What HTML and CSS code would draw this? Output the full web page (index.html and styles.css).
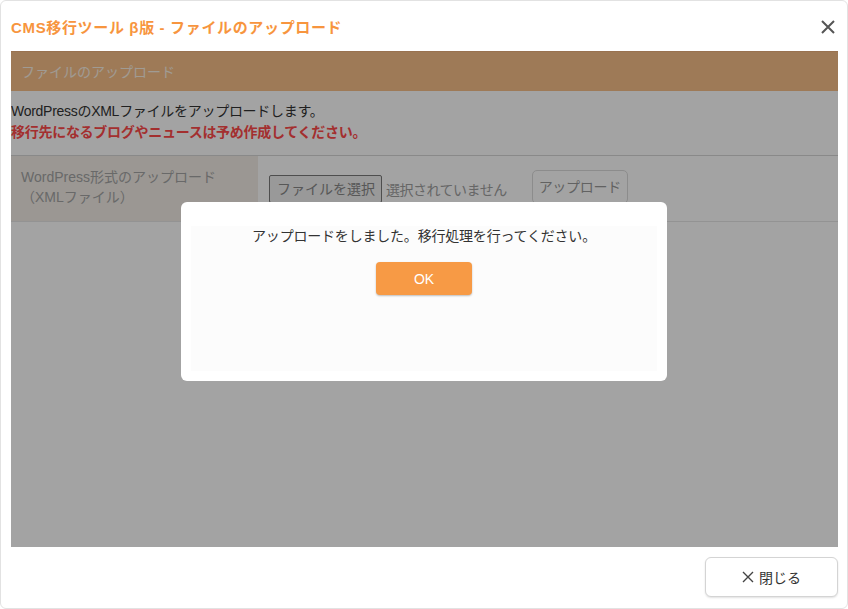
FILE: index.html
```html
<!DOCTYPE html>
<html lang="ja">
<head>
    <meta charset="UTF-8">
    <meta name="viewport" content="width=device-width, initial-scale=1.0">
    <title>CMS移行ツール β版 - ファイルのアップロード</title>
    <link rel="stylesheet" href="styles.css">
</head>
<body>
    <div class="window">
        <div class="window-head">
            <h1 class="window-title">CMS移行ツール β版 - ファイルのアップロード</h1>
            <button class="close-x" title="閉じる">
                <svg width="16" height="16" viewBox="0 0 16 16">
                    <path d="M2 2 L14 14 M14 2 L2 14" stroke="#555" stroke-width="2" fill="none"></path>
                </svg>
            </button>
        </div>

        <div class="frame">
            <div class="panel-head">ファイルのアップロード</div>
            <div class="intro">
                <p>WordPressのXMLファイルをアップロードします。</p>
                <p class="warn">移行先になるブログやニュースは予め作成してください。</p>
            </div>
            <div class="form-row">
                <div class="form-label">WordPress形式のアップロード<br>（XMLファイル）</div>
                <div class="form-field">
                    <span class="file-btn">ファイルを選択</span>
                    <span class="file-name">選択されていません</span>
                    <span class="upload-btn">アップロード</span>
                </div>
            </div>

            <!-- モーダル背景 -->
            <div class="backdrop"></div>
            <div class="dialog">
                <div class="dialog-body">
                    <p class="dialog-msg">アップロードをしました。移行処理を行ってください。</p>
                    <button class="ok-btn">OK</button>
                </div>
            </div>
        </div>

        <div class="window-foot">
            <button class="close-btn">
                <svg width="12" height="12" viewBox="0 0 12 12">
                    <path d="M1 1 L11 11 M11 1 L1 11" stroke="#444" stroke-width="1.4" fill="none"></path>
                </svg>
                閉じる
            </button>
        </div>
    </div>
</body>
</html>
```

FILE: styles.css
```css
* { box-sizing: border-box; }
body {
    margin: 0;
    background-color: #fff;
    font-family: "Liberation Sans", "Noto Sans CJK JP", sans-serif;
    color: #333;
}
p { margin: 0; }

.window { width: 848px; height: 609px; border: 1px solid #e2e2e2; border-radius: 6px; background: #fff; display: flex; flex-direction: column; padding: 0 9px 0 10px; }
.window-head { height: 50px; display: flex; align-items: center; justify-content: space-between; }
.window-title { margin: 0; font-size: 15px; font-weight: bold; color: #f7953e; letter-spacing: 0.65px; }
.close-x { border: 0; background: none; padding: 0; width: 18px; height: 18px; margin-right: 1px; margin-top: 3px; cursor: pointer; }

.frame { position: relative; height: 496px; background: #fff; overflow: hidden; }
.panel-head { height: 40px; line-height: 40px; padding-left: 10px; background: #f7bf89; color: #fbf2e6; font-size: 14px; border-top: 1px solid #efb37e; }
.intro { padding: 10px 0 12px; font-size: 14px; line-height: 21px; letter-spacing: -0.28px; }
.warn { color: #ff4a4a; font-weight: bold; }

.form-row { display: flex; border-top: 1px solid #d6d6d6; border-bottom: 1px solid #e6e6e6; height: 67px; }
.form-label { width: 247px; background: #f2ede6; padding: 11px 10px; font-size: 14px; line-height: 20px; color: #a4a4a4; }
.form-field { display: flex; align-items: center; padding: 0 10px; font-size: 14px; color: #a0a0a0; }
.file-btn { border: 1px solid #7a7a7a; border-radius: 2px; background: #efefef; padding: 0 6px 0 7px; height: 28px; line-height: 26px; color: #888; margin-left: 1px; }
.file-name { margin-left: 4px; letter-spacing: -0.5px; }
.upload-btn { margin-left: 25px; height: 34px; line-height: 32px; padding: 0 6px; border: 1px solid #dcdcdc; border-radius: 5px; color: #999; margin-top: -4px; letter-spacing: -0.3px; }

.backdrop { position: absolute; inset: 0; background: rgba(0, 0, 0, 0.36); }
.dialog { position: absolute; left: 170px; top: 151px; width: 486px; height: 179px; background: #fff; border-radius: 6px; padding: 24px 10px 10px; }
.dialog-body { height: 100%; background: #fcfcfc; display: flex; flex-direction: column; align-items: center; }
.dialog-msg { font-size: 14px; line-height: 20px; color: #333; letter-spacing: -0.2px; }
.ok-btn { margin-top: 16px; width: 96px; height: 33px; border: 0; border-radius: 4px; background: #f79a45; color: #fff; font-family: inherit; font-size: 14px; box-shadow: 0 1px 2px rgba(0, 0, 0, 0.25); }

.window-foot { flex: 1; display: flex; justify-content: flex-end; align-items: flex-start; padding-top: 10px; }
.close-btn { width: 133px; height: 40px; border: 1px solid #d4d4d4; border-radius: 6px; background: #fff; font-family: inherit; font-size: 14px; color: #333; display: flex; align-items: center; justify-content: center; gap: 5px; box-shadow: 0 1px 2px rgba(0, 0, 0, 0.12); }
```
